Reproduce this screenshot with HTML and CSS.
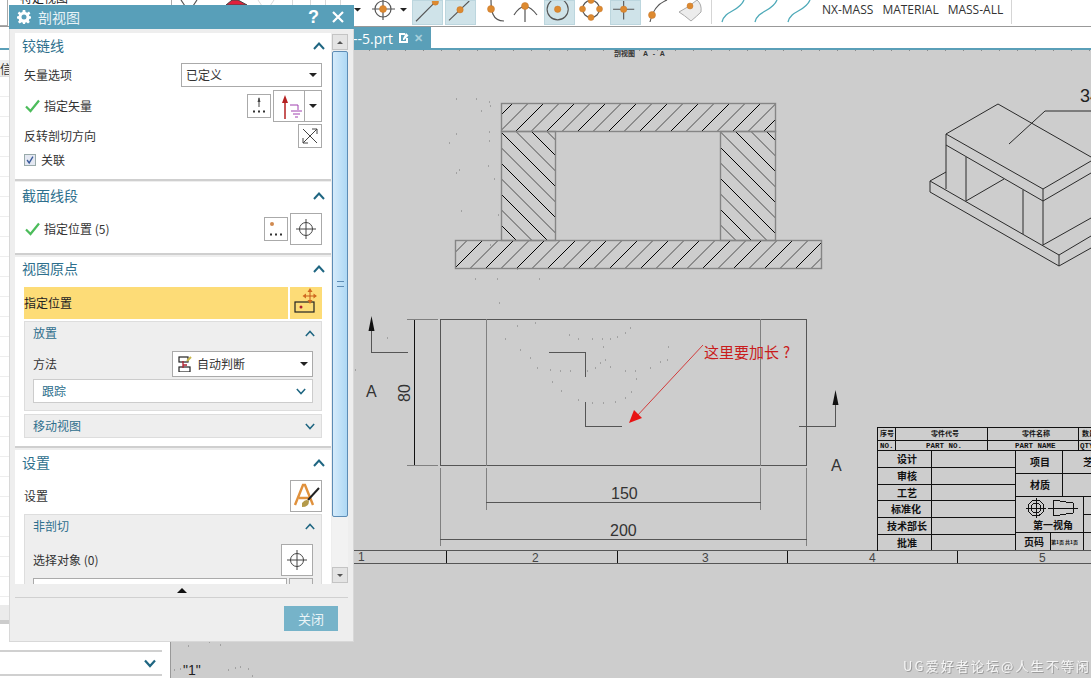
FILE: index.html
```html
<!DOCTYPE html>
<html lang="zh">
<head>
<meta charset="utf-8">
<title>剖视图</title>
<link rel="stylesheet" href="styles.css">
</head>
<body>
<div class="app">
  <header class="toolbar">
    <div class="tb-left"><span class="tb-combo"></span><span class="tb-clip">特定视图</span></div>
    <svg class="tb-old" viewBox="172 0 240 26">
      <path class="ln-g" d="M181 0 L185 6 H193 L197 0"/>
      <path class="ln-r" d="M226 5 L232 0 H238 L247 5 Z"/>
      <path class="ln-l" d="M258 0 L262 6 H270 L274 0 M292.500 0 V26 M310.500 0 V26 M325.500 0 V26 M340.500 0 V26"/>
      <path class="tri" d="M354 8 h7 l-3.500 3.500 Z M400 8 h7 l-3.500 3.500 Z"/>
      <circle class="ln-g" cx="383" cy="9" r="8"/>
      <path class="ln-g" d="M372 9 H395 M383 -2 V20"/>
      <circle class="dot" cx="383" cy="9" r="3.500"/>
    </svg>
    <svg class="ico on" viewBox="0 0 31 25"><path class="ln" d="M3 22 L24 1"/><circle class="dot" cx="24" cy="1" r="3.500"/></svg>
    <svg class="ico on" viewBox="0 0 31 25"><path class="ln" d="M3 21 L25 0"/><circle class="dot" cx="15" cy="9.500" r="3.500"/></svg>
    <svg class="ico" viewBox="0 0 31 25"><path class="ln" d="M13 0 C13 10 14 21 26 21"/><circle class="dot" cx="13" cy="9" r="3.500"/></svg>
    <svg class="ico" viewBox="0 0 31 25"><path class="ln" d="M3 15 Q8 7 14 6 Q20 7 26 15 M14 6 V22"/><circle class="dot" cx="14" cy="6" r="3.500"/></svg>
    <svg class="ico on" viewBox="0 0 31 25"><circle class="ln" cx="13.500" cy="9" r="11.500"/><circle class="dot" cx="13.500" cy="9" r="3.500"/></svg>
    <svg class="ico" viewBox="0 0 31 25"><circle class="ln" cx="14" cy="9" r="8.500"/><circle class="dot" cx="14" cy="0.500" r="3"/><circle class="dot" cx="5.500" cy="9" r="3"/><circle class="dot" cx="22.500" cy="9" r="3"/><circle class="dot" cx="14" cy="17.500" r="3"/></svg>
    <svg class="ico on" viewBox="0 0 31 25"><path class="ln" d="M2 9 H25 M13.500 0 V20"/><circle class="dot" cx="13.500" cy="9" r="3.500"/></svg>
    <svg class="ico" viewBox="0 0 31 25"><path class="ln" d="M7 22 C9 12 14 4 24 0"/><circle class="dot" cx="9" cy="15" r="3.500"/></svg>
    <svg class="ico" viewBox="0 0 31 25"><path class="surf" d="M3 12 Q13 7 21 0 Q26 4 25 12 Q21 16 15 21 Q8 15 3 12 Z"/><circle class="dot" cx="14" cy="6" r="3"/></svg>
    <span class="tb-sep"></span>
    <svg class="ico" viewBox="0 0 31 25"><path class="teal" d="M5 22 C8 10 22 12 27 0"/></svg>
    <svg class="ico" viewBox="0 0 31 25"><path class="teal" d="M5 22 C8 10 22 12 27 0"/></svg>
    <svg class="ico" viewBox="0 0 31 25"><path class="teal" d="M5 22 C8 10 22 12 27 0"/></svg>
    <span class="tb-text first">NX-MASS</span>
    <span class="tb-text">MATERIAL</span>
    <span class="tb-text">MASS-ALL</span>
    <span class="tb-sep end"></span>
  </header>

  <div class="tabbar">
    <div class="tab">
      <span class="tab-name">部件--5.prt</span>
      <svg class="tab-doc" viewBox="0 0 11 11"><path d="M1 1 H7 V3 H3 V9 H8 V6 H10 V11 H1 Z M8 1 L10.500 3.500 L6 8 H5 V6.500 Z"/></svg>
      <span class="tab-x">✕</span>
    </div>
  </div>

  <main class="main">
    <aside class="side">
      <div class="side-top"></div>
      <div class="side-head">信</div>
      <div class="side-rows">
        <div class="side-row"></div><div class="side-row"></div><div class="side-row"></div><div class="side-row"></div><div class="side-row"></div><div class="side-row"></div>
        <div class="side-row"></div><div class="side-row"></div><div class="side-row"></div><div class="side-row"></div><div class="side-row"></div><div class="side-row"></div>
        <div class="side-row"></div><div class="side-row"></div><div class="side-row"></div><div class="side-row"></div><div class="side-row"></div><div class="side-row"></div>
        <div class="side-row"></div><div class="side-row"></div><div class="side-row"></div><div class="side-row"></div><div class="side-row"></div><div class="side-row"></div>
        <div class="side-row"></div><div class="side-row"></div>
      </div>
      <div class="side-band"></div>
      <div class="side-fold">
        <svg class="chev big" viewBox="0 0 12 8"><path d="M1 1 L6 6.500 L11 1"/></svg>
      </div>
    </aside>

    <svg class="sheet" viewBox="171 50 920 628">
      <defs>
        <pattern id="h1" width="31" height="31" patternUnits="userSpaceOnUse" patternTransform="translate(27 0)"><path class="hk" d="M0 31 L31 0"/><path class="hg" d="M0 15.500 L15.500 0 M15.500 31 L31 15.500"/></pattern>
        <pattern id="h2" width="31" height="31" patternUnits="userSpaceOnUse" patternTransform="translate(10 0)"><path class="hk" d="M0 31 L31 0"/><path class="hg" d="M0 15.500 L15.500 0 M15.500 31 L31 15.500"/></pattern>
        <pattern id="b1" width="31" height="31" patternUnits="userSpaceOnUse" patternTransform="translate(0 3)"><path class="hk" d="M0 0 L31 31"/><path class="hg" d="M0 15.500 L15.500 31 M15.500 0 L31 15.500"/></pattern>
        <pattern id="b2" width="31" height="31" patternUnits="userSpaceOnUse" patternTransform="translate(0 16)"><path class="hk" d="M0 0 L31 31"/><path class="hg" d="M0 15.500 L15.500 31 M15.500 0 L31 15.500"/></pattern>
      </defs>

      <path class="ruler" d="M171 50.500 H1091"/>
      <text class="t-tiny" x="614" y="56">剖视图</text>
      <text class="t-tiny wide" x="643" y="56">A - A</text>

      <rect class="sec" fill="url(#h1)" x="501.500" y="103.500" width="274" height="28"/>
      <rect class="sec" fill="url(#b1)" x="501.500" y="131.500" width="54" height="109"/>
      <rect class="sec" fill="url(#b2)" x="720.500" y="131.500" width="55" height="109"/>
      <rect class="sec" fill="url(#h2)" x="455.500" y="240.500" width="366" height="28"/>

      <path class="iso" d="M946 134 L998 104 L1091 157 M946 134 L1043 189 L1091 161 M946 134 V145 M1043 189 V201 M946 145 L1043 201 L1091 173 M946 145 V189 M966 157 V201 M966 201 L1004 179 M1023 190 V234 M1043 201 V245 M946 172 L930 181 V192 L1059 266 L1091 248 M930 181 L1059 255 L1091 236 M1059 255 V266 M1043 245 L1091 218 M1009 144 L1045 111 H1091"/>
      <text class="t-iso" x="1080" y="102">34</text>

      <g class="thin">
        <rect x="440.500" y="319.500" width="366" height="146"/>
        <path class="gr" d="M486.500 319 V466 M760.500 319 V466"/>
        <path d="M549 352.500 H585.500 V377 M585.500 402 V426.500 H622"/>
        <path d="M371.500 328 V352.500 H408 M799 426.500 H835.500 V402"/>
        <path class="blk" d="M414.500 319.500 V465.500"/>
        <path class="gr" d="M407 319.500 H438 M407 465.500 H438 M440.500 468 V546 M806.500 468 V546 M486.500 468 V510 M760.500 468 V510"/>
        <path d="M486 502.500 H761 M440 539.500 H807"/>
        <path d="M354 550.500 H1091 M354 563.500 H1091"/>
        <path class="blk" d="M446.500 551 V563 M617.500 551 V563 M787.500 551 V563 M957.500 551 V563"/>
      </g>
      <path class="arr" d="M371.500 316 L368.500 331 H374.500 Z M835.500 390 L832.500 405 H838.500 Z"/>
      <text class="t-dim" x="366" y="397">A</text>
      <text class="t-dim" x="831" y="471">A</text>
      <text class="t-dim" transform="translate(410 402) rotate(-90)">80</text>
      <text class="t-dim" x="611" y="499">150</text>
      <text class="t-dim" x="610" y="536">200</text>
      <text class="t-rul" x="358" y="561">1</text>
      <text class="t-rul" x="532" y="562">2</text>
      <text class="t-rul" x="702" y="562">3</text>
      <text class="t-rul" x="869" y="562">4</text>
      <text class="t-rul" x="1039" y="562">5</text>

      <path class="red" d="M703 345 L636 417"/>
      <path class="redf" d="M629 423 L634 410 L642 418 Z"/>
      <text class="t-red" x="704" y="358">这里要加长<tspan dx="4">?</tspan></text>

      <g class="blockl">
        <path d="M877.500 427.500 H1091 M877.500 440.500 H1091 M877.500 450.500 H1091 M877.500 467.500 H1015 M877.500 484.500 H1015 M877.500 500.500 H1015 M877.500 517.500 H1015 M877.500 534.500 H1015 M1015 473.500 H1091 M1015 496.500 H1091 M1015 532.500 H1091 M1083 514.500 H1091"/>
        <path d="M877.500 427 V551 M895.500 427 V451 M987.500 427 V451 M1078.500 427 V451 M931.500 451 V550 M1015.500 451 V550 M1062.500 451 V496 M1083.500 496 V550 M1050.500 532 V550"/>
        <circle cx="1036" cy="508" r="8"/><circle cx="1036" cy="508" r="5"/>
        <path d="M1026 508 H1046 M1036 498 V518 M1048 508 H1078 M1053 500 L1073 503 V513 L1053 516 Z"/>
      </g>
      <text class="t-bk s" x="880" y="436">序号</text>
      <text class="t-bk s" x="931" y="436">零件代号</text>
      <text class="t-bk s" x="1022" y="436">零件名称</text>
      <text class="t-bk s" x="1082" y="436">数量</text>
      <text class="t-la" x="880" y="448">NO.</text>
      <text class="t-la" x="926" y="448">PART NO.</text>
      <text class="t-la" x="1015" y="448">PART NAME</text>
      <text class="t-la" x="1080" y="448">QTY</text>
      <text class="t-bk" x="897" y="463">设计</text>
      <text class="t-bk" x="897" y="480">审核</text>
      <text class="t-bk" x="897" y="497">工艺</text>
      <text class="t-bk" x="891" y="513">标准化</text>
      <text class="t-bk" x="887" y="530">技术部长</text>
      <text class="t-bk" x="897" y="547">批准</text>
      <text class="t-bk" x="1030" y="466">项目</text>
      <text class="t-bk" x="1030" y="489">材质</text>
      <text class="t-bk" x="1083" y="466">芝</text>
      <text class="t-bk" x="1033" y="529">第一视角</text>
      <text class="t-bk" x="1024" y="546">页码</text>
      <text class="t-bk xs" x="1051" y="544">第1页 共1页</text>

      <path class="spk" d="M630 328h1M625 333h1M617 337h1M610 339h1M602 339h1M592 339h1M578 339h1M569 335h1M535 323h1M499 303h1M517 326h1M505 339h1M520 350h1M530 358h1M537 368h1M550 370h1M560 371h1M570 371h1M587 371h1M595 368h1M600 363h1M605 360h1M610 367h1M625 371h1M635 371h1M650 368h1M660 362h1M667 360h1M668 347h1M603 347h1M636 379h1M552 382h1M561 391h1M578 400h1M592 403h1M603 403h1M615 402h1M625 398h1M631 392h1M456 99h1M476 99h1M489 102h1M490 106h1M481 111h1M456 134h1M489 132h1M449 143h1M489 141h1M456 173h1M459 170h1M488 166h1M494 179h1M461 211h1M498 215h1M490 245h1M517 269h1M475 279h1M497 279h1M539 279h1M188 646h1M209 642h1M220 645h1M174 670h1M180 669h1M228 670h1M235 668h1M240 667h1M248 669h1M252 676h1M355 370h1M387 338h1"/>
      <text class="t-one" x="183" y="675">"1"</text>
      <text class="t-wm" x="903" y="671">UG爱好者论坛@人生不等闲</text>
    </svg>
  </main>

  <section class="dialog">
    <div class="dlg-title">
      <svg class="dlg-gear" viewBox="0 0 14 14"><path d="M5.800 0 H8.200 L8.600 2 L10.200 2.700 L12 1.600 L13.400 3.400 L11.900 4.900 L12.300 6 L14 6.600 V8.400 L12.300 9 L11.800 10.300 L12.800 12 L11 13.400 L9.400 12.200 L8.400 12.500 L8 14 H6 L5.600 12.500 L4.400 12.200 L2.800 13.400 L1 12 L2.100 10.200 L1.700 9 L0 8.400 V6.600 L1.700 6 L2.100 4.800 L0.700 3.400 L2.100 1.600 L3.800 2.700 L5.400 2 Z M7 4.500 A2.500 2.500 0 1 0 7 9.500 A2.500 2.500 0 1 0 7 4.500 Z"/></svg>
      <span class="dlg-name">剖视图</span>
      <span class="dlg-q">?</span>
      <svg class="dlg-x" viewBox="0 0 12 12"><path d="M1 1 L11 11 M11 1 L1 11"/></svg>
    </div>
    <div class="dlg-body">
      <div class="dlg-scroll">
        <div class="sec-box pb-11">
          <div class="sec-head"><span>铰链线</span><svg class="chev up" viewBox="0 0 12 8"><path d="M1 7 L6 1.500 L11 7"/></svg></div>
          <div class="row h24 mt4"><span class="lbl grow">矢量选项</span>
            <div class="select s141"><span class="grow">已定义</span><i class="caret"></i></div></div>
          <div class="row h32 mt3">
            <svg class="check" viewBox="0 0 15 14"><path d="M1 7.500 L5.500 12 L14 1.500"/></svg>
            <span class="lbl grow">指定矢量</span>
            <span class="ibtn b24 mr2"><svg class="i20" viewBox="0 0 20 20"><path class="ink" d="M10 2 V11"/><path class="ink-f" d="M10 1 L8.500 6 H11.500 Z"/><path class="dots" d="M4 15.500h2M9 15.500h2M14 15.500h2"/></svg></span>
            <span class="ibtn b32"><svg class="i28" viewBox="0 0 28 28"><path class="dred" d="M10 7 V27"/><path class="dred-f" d="M10 3 L7 11 H13 Z"/><path class="purp" d="M15 13 H23 V18 M16 19 H27 M18 22 H25 M20 25 H23"/></svg></span>
            <span class="ibtn b17"><i class="caret"></i></span>
          </div>
          <div class="row h24 mt2"><span class="lbl grow">反转剖切方向</span>
            <span class="ibtn b24"><svg class="i20" viewBox="0 0 20 20"><path class="ink" d="M3 3 L17 17 M17 3 L3 17 M12 3 H17 V8 M3 12 V17 H8"/></svg></span></div>
          <div class="row h16 mt4"><span class="cb"><svg viewBox="0 0 12 12"><path d="M2.500 6 L5 9.500 L9.500 2"/></svg></span><span class="lbl">关联</span></div>
        </div>

        <div class="sec-box pb-8">
          <div class="sec-head tall"><span>截面线段</span><svg class="chev up" viewBox="0 0 12 8"><path d="M1 7 L6 1.500 L11 7"/></svg></div>
          <div class="row h32 mt3">
            <svg class="check" viewBox="0 0 15 14"><path d="M1 7.500 L5.500 12 L14 1.500"/></svg>
            <span class="lbl grow">指定位置 (5)</span>
            <span class="ibtn b24 mr2"><svg class="i20" viewBox="0 0 20 20"><circle class="odot" cx="6" cy="5" r="2"/><path class="dots" d="M4 15.500h2M9 15.500h2M14 15.500h2"/></svg></span>
            <span class="ibtn b32"><svg class="i28" viewBox="0 0 28 28"><circle class="ink" cx="14" cy="14" r="6.500"/><path class="ink" d="M4 14 H24 M14 4 V24"/></svg></span>
          </div>
        </div>

        <div class="sec-box pb-8 gap3">
          <div class="sec-head short"><span>视图原点</span><svg class="chev up" viewBox="0 0 12 8"><path d="M1 7 L6 1.500 L11 7"/></svg></div>
          <div class="row h32 mt6">
            <span class="hl grow">指定位置</span>
            <span class="hl-btn"><svg class="i28" viewBox="0 0 28 28"><rect class="ink-b" x="3" y="13" width="19" height="10"/><circle class="rdot" cx="9" cy="18" r="1.500"/><path class="move" d="M18 1 V13 M12 7 H24"/><path class="movef" d="M18 -1 L15.500 3 H20.500 Z M18 15 L15.500 11 H20.500 Z M10.500 7 L14 4.500 V9.500 Z M25 7 L21.500 4.500 V9.500 Z"/></svg></span>
          </div>
          <div class="group mt2">
            <div class="grp-head"><span>放置</span><svg class="chev up sm" viewBox="0 0 12 8"><path d="M1 7 L6 1.500 L11 7"/></svg></div>
            <div class="row h26 mt7 px8"><span class="lbl grow">方法</span>
              <div class="select s141">
                <svg class="i16" viewBox="0 0 16 16"><rect class="ink-b" x="2" y="1" width="9" height="5"/><rect class="ink-b" x="2" y="11" width="11" height="5"/><path class="rd2" d="M6 5 V12 M6 9 H10"/><path class="yel" d="M10 5 L14 1"/></svg>
                <span class="grow ml6">自动判断</span><i class="caret"></i></div></div>
            <div class="subfold"><span>跟踪</span><svg class="chev sm" viewBox="0 0 12 8"><path d="M1 1 L6 6.500 L11 1"/></svg></div>
          </div>
          <div class="group folded mt3"><div class="grp-head"><span>移动视图</span><svg class="chev sm" viewBox="0 0 12 8"><path d="M1 1 L6 6.500 L11 1"/></svg></div></div>
        </div>

        <div class="sec-box last">
          <div class="sec-head"><span>设置</span><svg class="chev up" viewBox="0 0 12 8"><path d="M1 7 L6 1.500 L11 7"/></svg></div>
          <div class="row h32 mt4"><span class="lbl grow">设置</span>
            <span class="ibtn b32"><svg class="i28" viewBox="0 0 28 28"><path class="ora" d="M3 23 L11 3 H13 L21 23 M7 16 H17"/><path class="brush" d="M27 6 L16 18"/><path class="brushf" d="M10 21 Q14 16 17 19 Q17 25 10 25 Z"/></svg></span></div>
          <div class="group mt2 tallg">
            <div class="grp-head"><span>非剖切</span><svg class="chev up sm" viewBox="0 0 12 8"><path d="M1 7 L6 1.500 L11 7"/></svg></div>
            <div class="row h32 mt7 px8"><span class="lbl grow">选择对象 (0)</span>
              <span class="ibtn b32"><svg class="i28" viewBox="0 0 28 28"><circle class="ink" cx="14" cy="14" r="6.500"/><path class="ink" d="M4 14 H24 M14 4 V24"/></svg></span></div>
            <div class="row h24 mt2 px8"><span class="input grow"></span><span class="ibtn b24w"></span></div>
          </div>
        </div>
      </div>
      <div class="vbar">
        <span class="vbtn"><i class="vtri upw"></i></span>
        <span class="vthumb"><i class="grip"></i></span>
        <span class="vtrack"></span>
        <span class="vbtn"><i class="vtri dn"></i></span>
      </div>
    </div>
    <div class="dlg-foot">
      <div class="foot-fold"><i class="foot-tri"></i></div>
      <div class="foot-act"><button class="close" type="button">关闭</button></div>
    </div>
  </section>
</div>
</body>
</html>
```
FILE: styles.css
```css
* { box-sizing: border-box; }
html, body { margin: 0; padding: 0; }
body { width: 1091px; height: 678px; overflow: hidden; background: #fff; font-family: "Noto Sans CJK SC", "Noto Sans", sans-serif; color: #333; }
.app { position: relative; width: 1091px; height: 678px; display: flex; flex-direction: column; overflow: hidden; }

/* toolbar */
.toolbar { height: 27px; flex: none; display: flex; align-items: flex-start; background: #fff; border-bottom: 1px solid #999; }
.tb-left { width: 172px; height: 26px; flex: none; position: relative; border-right: 1px solid #aaa; overflow: hidden; }
.tb-combo { position: absolute; left: -10px; top: -2px; width: 18px; height: 28px; border: 1px solid #aaa; }
.tb-clip { position: absolute; left: 20px; top: -11px; font-size: 12px; color: #222; }
.tb-old { width: 240px; height: 26px; flex: none; }
.ico { width: 31px; height: 25px; flex: none; margin-right: 2px; }
.ico.on { background: #cfe3e9; border: 1px solid #bcd6de; }
.ln, .ln-g { fill: none; stroke: #555; stroke-width: 1.200; }
.ln-l { fill: none; stroke: #d8d8d8; stroke-width: 1; }
.ln-r { fill: #e0203c; stroke: #444; }
.tri { fill: #222; }
.dot { fill: #dd8a30; stroke: #c9762a; stroke-width: .5; }
.surf { fill: #ececec; stroke: #aaa; }
.teal { fill: none; stroke: #4da9b8; stroke-width: 1.300; }
.tb-sep { width: 1px; height: 24px; background: #d5d5d5; margin: 0 5px 0 2px; flex: none; }
.tb-sep.end { margin: 0 0 0 -1px; }
.tb-text { font-family: "Open Sans", sans-serif; font-size: 12px; color: #333; line-height: 20px; margin-right: 9px; white-space: nowrap; }
.tb-text.first { margin-left: 6px; }

/* tab bar */
.tabbar { height: 23px; flex: none; background: #fff; border-bottom: 2px solid #5a9fb8; display: flex; }
.tab { width: 256px; margin-left: 175px; height: 21px; background: #5a9fb8; color: #fff; display: flex; align-items: center; justify-content: flex-end; padding-right: 6px; font-family: "Open Sans", "Noto Sans CJK SC", sans-serif; font-size: 14px; white-space: nowrap; }
.tab-name { margin-right: 5px; }
.tab-doc { width: 11px; height: 11px; fill: #fff; margin-right: 5px; }
.tab-x { color: #a9d0dc; font-size: 11px; font-weight: bold; width: 11px; }

/* main */
.main { flex: 1; display: flex; min-height: 0; }
.side { width: 171px; flex: none; background: #fff; border-right: 1px solid #999; padding-right: 8px; display: flex; flex-direction: column; overflow: hidden; }
.side-top { height: 10px; flex: none; }
.side-head { height: 17px; flex: none; background: #f0f0f0; font-size: 12px; line-height: 17px; color: #333; border-bottom: 1px solid #ddd; }
.side-rows { height: 528px; flex: none; overflow: hidden; }
.side-row { height: 20px; border-bottom: 1px solid #eee; }
.side-band { height: 19px; flex: none; background: #ebebeb; border-bottom: 4px solid #ccc; }
.side-fold { height: 26px; margin-top: 26px; flex: none; border-top: 2px solid #d0d0d0; border-bottom: 2px solid #d0d0d0; display: flex; align-items: center; justify-content: flex-end; padding-right: 6px; }
.sheet { display: block; width: 920px; height: 628px; flex: none; background: #cdcdcd; }

.ruler { stroke: #8a8a8a; stroke-width: 1; stroke-dasharray: 1 17; fill: none; }
.hk { stroke: #000; stroke-width: 1; fill: none; shape-rendering: crispEdges; }
.hg { stroke: #8c8c8c; stroke-width: 1; fill: none; shape-rendering: crispEdges; }
.sec { stroke: #858585; stroke-width: 1.400; }
.iso { fill: none; stroke: #2a2a2a; stroke-width: 1; }
.thin { fill: none; stroke: #555; stroke-width: 1; shape-rendering: crispEdges; }
.thin rect { stroke: #555; }
.thin .gr { stroke: #808080; }
.thin .blk { stroke: #111; }
.arr { fill: #111; }
.red { stroke: #d23b3b; stroke-width: 1; fill: none; }
.redf { fill: #e81414; }
.blockl { fill: none; stroke: #111; stroke-width: 1; shape-rendering: crispEdges; }
.spk { fill: none; stroke: #777; stroke-width: 1; }
text { font-family: "Liberation Sans", "Noto Sans CJK SC", sans-serif; }
.t-tiny { font-family: "Noto Sans CJK SC", sans-serif; font-size: 7px; font-weight: 700; fill: #333; }
.t-tiny.wide { font-family: "Liberation Sans", sans-serif; letter-spacing: 1.500px; }
.t-iso { font-size: 18px; fill: #222; }
.t-dim { font-size: 16px; fill: #333; }
.t-rul { font-size: 12px; fill: #444; }
.t-red { font-family: "Noto Sans CJK SC", sans-serif; font-size: 15px; fill: #c91c1c; }
.t-bk { font-family: "Noto Sans CJK SC", sans-serif; font-size: 10px; font-weight: 700; fill: #111; }
.t-bk.s { font-size: 7px; }
.t-bk.xs { font-size: 5px; }
.t-la { font-family: "Liberation Mono", monospace; font-size: 7.500px; font-weight: 700; fill: #111; }
.t-one { font-size: 14px; fill: #222; }
.t-wm { font-family: "Noto Sans CJK SC", sans-serif; font-size: 13px; letter-spacing: 2.100px; fill: #f6f6f6; filter: drop-shadow(1px 1px 0 #9c9c9c); }

/* dialog */
.dialog { position: absolute; left: 9px; top: 5px; width: 345px; height: 637px; background: #eee; border: 1px solid #d8d8d8; border-top: 0; display: flex; flex-direction: column; }
.dlg-title { height: 24px; flex: none; background: #589fb9; display: flex; align-items: center; padding-left: 8px; color: #e8f3f7; margin: 0 -1px; }
.dlg-gear { width: 14px; height: 14px; fill: #fff; margin-right: 7px; }
.dlg-name { font-size: 14px; flex: 1; }
.dlg-q { font-family: "Liberation Sans", sans-serif; font-weight: 700; font-size: 18px; color: #fff; margin-right: 13px; }
.dlg-x { width: 12px; height: 12px; fill: none; stroke: #fff; stroke-width: 2.200; margin-right: 10px; }
.dlg-body { height: 555px; flex: none; padding-left: 5px; display: flex; overflow: hidden; }
.dlg-scroll { width: 316px; flex: none; padding-top: 4px; overflow: hidden; }
.sec-box { background: #fff; padding: 0 9px; border-bottom: 2px solid #cfcfcf; margin-bottom: 1px; }
.sec-box.gap3 { margin-top: 2px; margin-bottom: 2px; }
.sec-box.last { border-bottom: 0; margin: 0; padding-bottom: 20px; }
.pb-11 { padding-bottom: 11px; }
.pb-8 { padding-bottom: 8px; }
.sec-head { height: 26px; display: flex; align-items: center; justify-content: space-between; margin-left: -2px; font-size: 14px; color: #2e6f8d; margin-right: -3px; }
.sec-head > span { padding-bottom: 2px; }
.sec-head.tall { height: 28px; }
.sec-head.short { height: 24px; }
.chev { width: 12px; height: 8px; fill: none; stroke: #1f6682; stroke-width: 2; }
.chev.sm { width: 10px; height: 7px; stroke-width: 1.800; }
.chev.big { width: 12px; height: 9px; stroke-width: 2.200; }
.row { display: flex; align-items: center; }
.h16 { height: 16px; } .h24 { height: 24px; } .h26 { height: 26px; } .h32 { height: 32px; }
.mt2 { margin-top: 2px; } .mt3 { margin-top: 3px; } .mt4 { margin-top: 4px; } .mt6 { margin-top: 6px; } .mt7 { margin-top: 7px; }
.mr2 { margin-right: 2px; } .ml6 { margin-left: 4px; }
.px8 { padding: 0 8px; }
.grow { flex: 1; }
.lbl { font-size: 12px; color: #333; white-space: nowrap; padding-bottom: 2px; }
.select { height: 100%; display: flex; align-items: center; border: 1px solid #aaa; background: #fff; padding: 0 4px 0 4px; font-size: 12px; color: #333; }
.select > span { padding-bottom: 2px; }
.s141 { width: 141px; }
.caret { display: block; width: 0; height: 0; border-left: 4px solid transparent; border-right: 4px solid transparent; border-top: 4px solid #222; }
.check { width: 15px; height: 14px; margin: 0 4px 0 1px; fill: none; stroke: #4cbc5b; stroke-width: 2.200; flex: none; }
.ibtn { display: flex; align-items: center; justify-content: center; border: 1px solid #aaa; background: #fff; flex: none; }
.b24 { width: 24px; height: 24px; }
.b32 { width: 32px; height: 32px; }
.b17 { width: 17px; height: 32px; border-left: 0; }
.b24w { width: 24px; height: 24px; margin-left: 2px; background: #eee; }
.i20 { width: 20px; height: 20px; }
.i28 { width: 28px; height: 28px; overflow: visible; }
.i16 { width: 16px; height: 16px; flex: none; }
.ink { fill: none; stroke: #444; stroke-width: 1; }
.ink-f { fill: #444; }
.ink-b { fill: none; stroke: #222; stroke-width: 1.200; }
.dots { fill: none; stroke: #333; stroke-width: 2; }
.dred { fill: none; stroke: #b52020; stroke-width: 1.500; }
.dred-f { fill: #b52020; }
.purp { fill: none; stroke: #a040b0; stroke-width: 1; }
.odot { fill: #d08a50; }
.rdot { fill: #b02030; }
.move { fill: none; stroke: #c65a1a; stroke-width: 1; }
.movef { fill: #d06a20; }
.rd2 { fill: none; stroke: #b02030; stroke-width: 1.300; }
.yel { fill: none; stroke: #c9b84a; stroke-width: 2; }
.ora { fill: none; stroke: #e0913c; stroke-width: 2.400; }
.brush { fill: none; stroke: #222; stroke-width: 2; }
.brushf { fill: #b49a4a; }
.cb { width: 12px; height: 12px; border: 1px solid #9aa; background: #e4e8f2; display: block; margin-right: 5px; }
.cb svg { display: block; width: 10px; height: 10px; fill: none; stroke: #3a5a9a; stroke-width: 1.600; }
.hl { height: 100%; background: #fddc77; font-size: 12px; color: #222; display: flex; align-items: center; margin-right: 2px; padding-bottom: 2px; }
.hl-btn { width: 32px; height: 32px; background: #fddc77; display: flex; align-items: center; justify-content: center; flex: none; }
.group { background: #eee; border: 1px solid #ddd; padding-bottom: 7px; }
.group.folded { padding-bottom: 0; height: 24px; }
.group.tallg { height: 100px; padding-bottom: 0; overflow: hidden; }
.grp-head { height: 22px; display: flex; align-items: center; justify-content: space-between; padding: 0 6px 0 8px; font-size: 12px; color: #2e6f8d; }
.grp-head > span, .subfold > span { padding-bottom: 2px; }
.subfold { height: 24px; margin: 2px 8px 0; background: #fff; border: 1px solid #ccc; display: flex; align-items: center; justify-content: space-between; padding: 0 6px 0 8px; font-size: 12px; color: #2e6f8d; }
.input { height: 100%; background: #fff; border: 1px solid #aaa; }

/* scrollbar */
.vbar { width: 16px; margin-left: 1px; padding-top: 5px; display: flex; flex-direction: column; flex: none; }
.vbtn { height: 16px; flex: none; background: #e4e4e4; border: 1px solid #c4c4c4; display: flex; align-items: center; justify-content: center; }
.vtri { display: block; width: 0; height: 0; border-left: 3px solid transparent; border-right: 3px solid transparent; }
.vtri.upw { border-bottom: 3px solid #555; }
.vtri.dn { border-top: 3px solid #555; }
.vthumb { height: 466px; flex: none; margin-top: 1px; background: linear-gradient(90deg, #d5ebfb, #aed8f4); border: 1px solid #5d8cb5; border-radius: 2px; display: flex; align-items: center; justify-content: center; }
.grip { display: block; width: 7px; height: 6px; border-top: 1px solid #5d8cb5; border-bottom: 1px solid #5d8cb5; }
.vtrack { height: 50px; flex: none; background: #f2f2f2; }

/* footer */
.dlg-foot { flex: 1; padding: 0 5px; display: flex; flex-direction: column; }
.foot-fold { height: 14px; flex: none; border-bottom: 1px solid #d0d0d0; display: flex; justify-content: center; padding-top: 4px; }
.foot-tri { display: block; width: 0; height: 0; border-left: 5px solid transparent; border-right: 5px solid transparent; border-bottom: 5px solid #111; }
.foot-act { display: flex; justify-content: flex-end; padding: 8px 10px 0 0; }
.close { width: 54px; height: 25px; background: #76b3c9; color: #e9f4f7; border: 0; padding: 0; font-family: inherit; font-size: 13px; }
```
